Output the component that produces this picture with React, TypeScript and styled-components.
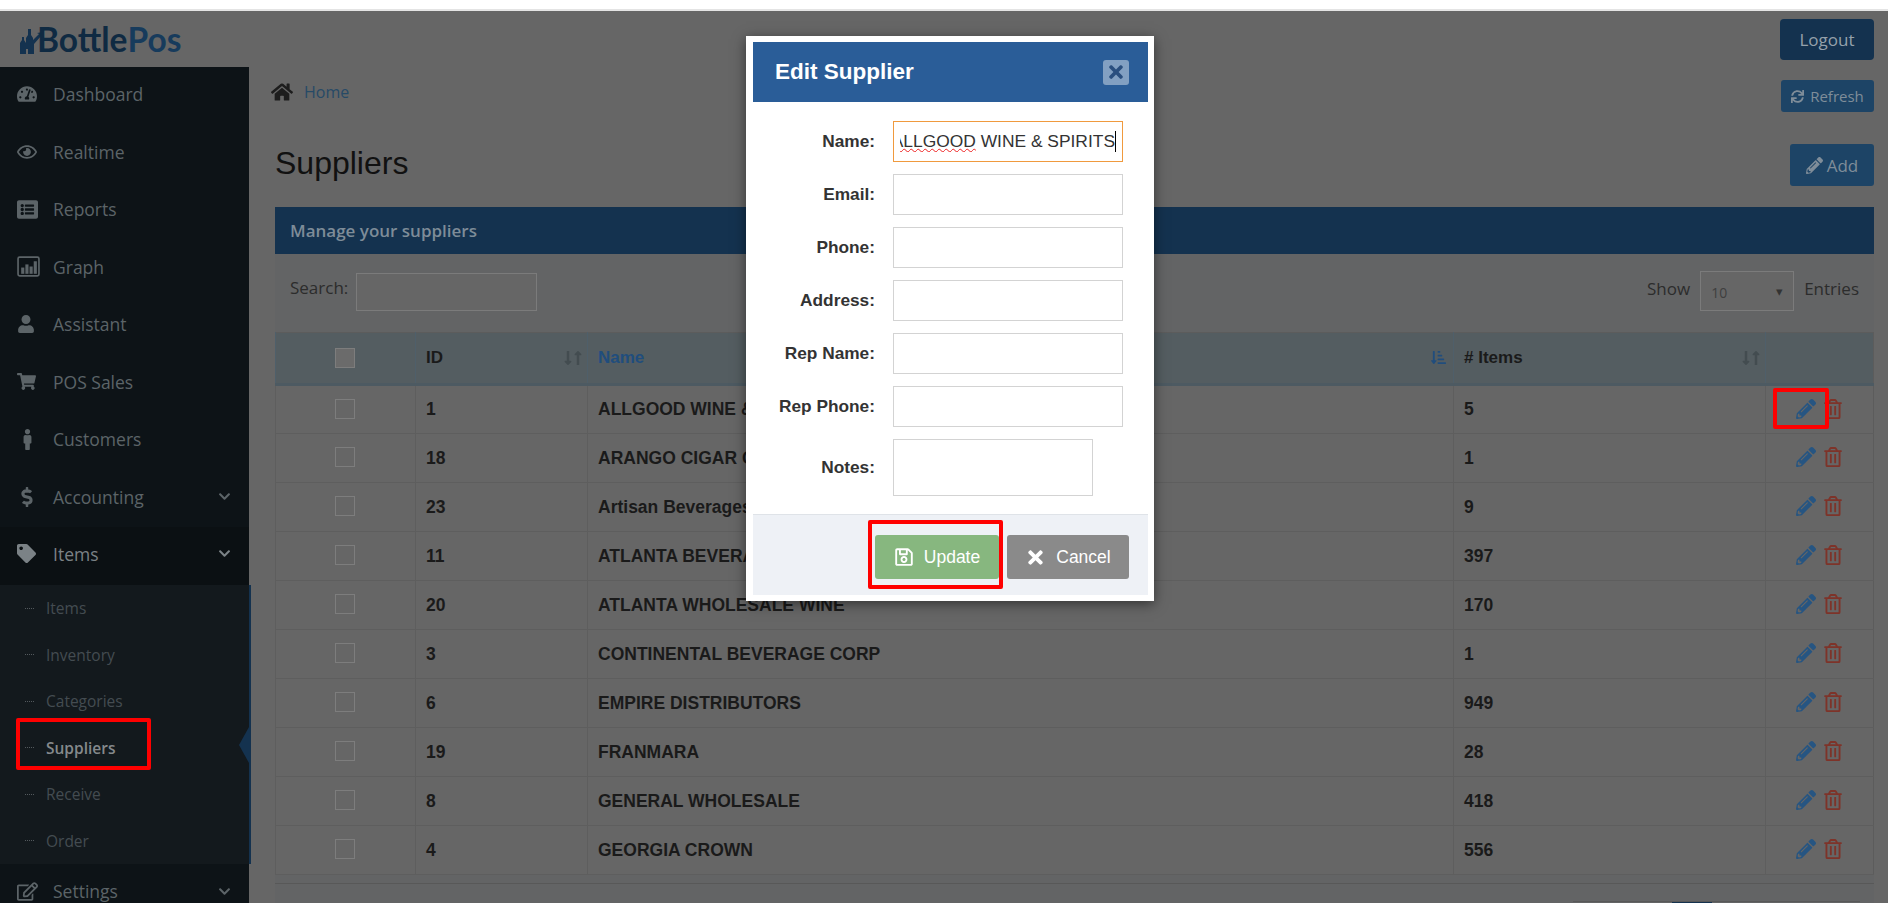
import { FC, ReactNode } from "react";
import styled, { createGlobalStyle } from "styled-components";
import {
  FaTachometerAlt,
  FaRegEye,
  FaListAlt,
  FaUser,
  FaShoppingCart,
  FaMale,
  FaDollarSign,
  FaTag,
  FaRegEdit,
  FaHome,
  FaSync,
  FaPencilAlt,
  FaRegTrashAlt,
  FaRegSave,
  FaTimes,
  FaLongArrowAltDown,
  FaLongArrowAltUp,
  FaSortAmountDownAlt,
  FaChevronDown,
} from "react-icons/fa";

const GlobalStyle = createGlobalStyle`
  html, body {
    margin: 0;
    padding: 0;
    background: #fff;
    overflow: hidden;
  }
  * {
    box-sizing: border-box;
  }
`;

const GraphIcon: FC = () => (
  <svg width="1em" height="1em" viewBox="0 0 22 22" fill="currentColor">
    <rect x="1" y="2" width="20" height="18" rx="1.5" fill="none" stroke="currentColor" strokeWidth="1.6" />
    <rect x="4" y="12" width="3" height="6" />
    <rect x="8" y="9" width="3" height="9" />
    <rect x="12" y="11" width="3" height="7" />
    <rect x="16" y="6" width="3" height="12" />
  </svg>
);

const navItems: Array<{ name: string; icon: ReactNode; size: number; arrow?: boolean; open?: boolean }> = [
  { name: "Dashboard", icon: <FaTachometerAlt />, size: 20 },
  { name: "Realtime", icon: <FaRegEye />, size: 20 },
  { name: "Reports", icon: <FaListAlt />, size: 21 },
  { name: "Graph", icon: <GraphIcon />, size: 23 },
  { name: "Assistant", icon: <FaUser />, size: 18 },
  { name: "POS Sales", icon: <FaShoppingCart />, size: 19 },
  { name: "Customers", icon: <FaMale />, size: 21 },
  { name: "Accounting", icon: <FaDollarSign />, size: 20, arrow: true },
  { name: "Items", icon: <FaTag />, size: 19, arrow: true, open: true },
];

const subItems = ["Items", "Inventory", "Categories", "Suppliers", "Receive", "Order"];

const suppliers = [
  { id: 1, name: "ALLGOOD WINE & SPIRITS", items: 5 },
  { id: 18, name: "ARANGO CIGAR CO", items: 1 },
  { id: 23, name: "Artisan Beverages", items: 9 },
  { id: 11, name: "ATLANTA BEVERAGE", items: 397 },
  { id: 20, name: "ATLANTA WHOLESALE WINE", items: 170 },
  { id: 3, name: "CONTINENTAL BEVERAGE CORP", items: 1 },
  { id: 6, name: "EMPIRE DISTRIBUTORS", items: 949 },
  { id: 19, name: "FRANMARA", items: 28 },
  { id: 8, name: "GENERAL WHOLESALE", items: 418 },
  { id: 4, name: "GEORGIA CROWN", items: 556 },
];

const formFields = ["Email", "Phone", "Address", "Rep Name", "Rep Phone"];

const SortArrows: FC = () => (
  <SortIcon>
    <FaLongArrowAltDown />
    <FaLongArrowAltUp />
  </SortIcon>
);

const Logo: FC = () => (
  <LogoWrap>
    <svg width="26" height="28" viewBox="0 0 26 28">
      <path
        d="M1 28V17l2-3v-3h2v3l2 3V12l2-3V3h3v6l2 3v2l6-6-2-1 6-1v6l-2-2-7 8v11H9v-6H7v6z"
        fill="#14324f"
      />
    </svg>
    <LogoDark>Bottle</LogoDark>
    <LogoLight>Pos</LogoLight>
  </LogoWrap>
);

export default function App() {
  return (
    <Page>
      <GlobalStyle />
      <TopStrip />
      <TopBar>
        <Logo />
        <LogoutButton>Logout</LogoutButton>
      </TopBar>
      <Body>
        <Sidebar>
          {navItems.map((item) => (
            <NavRow key={item.name} $open={item.open}>
              <NavIcon $size={item.size}>{item.icon}</NavIcon>
              <NavText>{item.name}</NavText>
              {item.arrow && <Chevron />}
            </NavRow>
          ))}
          <SubMenu>
            {subItems.map((name) => (
              <SubRow key={name} $active={name === "Suppliers"}>
                <SubDots />
                {name}
              </SubRow>
            ))}
            <ActiveArrow />
          </SubMenu>
          <NavRow>
            <NavIcon $size={21}>
              <FaRegEdit />
            </NavIcon>
            <NavText>Settings</NavText>
            <Chevron />
          </NavRow>
          <SuppliersMark />
        </Sidebar>

        <Main>
          <BreadcrumbRow>
            <Breadcrumb>
              <HomeIcon />
              <HomeLink>Home</HomeLink>
            </Breadcrumb>
            <RefreshButton>
              <FaSync />
              Refresh
            </RefreshButton>
          </BreadcrumbRow>

          <TitleRow>
            <Title>Suppliers</Title>
            <AddButton>
              <FaPencilAlt />
              Add
            </AddButton>
          </TitleRow>

          <Panel>
            <PanelHeader>Manage your suppliers</PanelHeader>
            <Toolbar>
              <SearchLabel>
                Search:
                <SearchBox />
              </SearchLabel>
              <ShowLabel>
                Show
                <SelectBox>
                  10
                  <SelectCaret>▾</SelectCaret>
                </SelectBox>
                Entries
              </ShowLabel>
            </Toolbar>

            <Table>
              <colgroup>
                <col style={{ width: 140 }} />
                <col style={{ width: 172 }} />
                <col style={{ width: 866 }} />
                <col style={{ width: 312 }} />
                <col />
              </colgroup>
              <thead>
                <tr>
                  <HeadCell $center>
                    <CheckBox $head />
                  </HeadCell>
                  <HeadCell>
                    ID
                    <SortArrows />
                  </HeadCell>
                  <HeadCell $sorted>
                    Name
                    <SortedIcon />
                  </HeadCell>
                  <HeadCell>
                    # Items
                    <SortArrows />
                  </HeadCell>
                  <HeadCell />
                </tr>
              </thead>
              <tbody>
                {suppliers.map((row) => (
                  <tr key={row.id}>
                    <Cell $center>
                      <CheckBox />
                    </Cell>
                    <Cell>{row.id}</Cell>
                    <Cell>{row.name}</Cell>
                    <Cell>{row.items}</Cell>
                    <Cell $center>
                      <Actions>
                        <EditIcon />
                        <TrashIcon />
                      </Actions>
                    </Cell>
                  </tr>
                ))}
              </tbody>
            </Table>

            <PagerBar>
              <Pager>
                <PagerCurrent />
              </Pager>
            </PagerBar>
          </Panel>
        </Main>
      </Body>

      <EditMark />
      <Modal>
        <ModalHeader>
          <ModalTitle>Edit Supplier</ModalTitle>
          <CloseButton>
            <FaTimes />
          </CloseButton>
        </ModalHeader>
        <ModalBody>
          <FormRow>
            <FieldLabel>Name:</FieldLabel>
            <NameField>
              <NameClip>
                <NameText>
                  <Misspelled>ALLGOOD</Misspelled> WINE &amp; SPIRITS
                </NameText>
              </NameClip>
            </NameField>
          </FormRow>
          {formFields.map((label) => (
            <FormRow key={label}>
              <FieldLabel>{label}:</FieldLabel>
              <FieldInput />
            </FormRow>
          ))}
          <FormRow>
            <FieldLabel>Notes:</FieldLabel>
            <NotesArea />
          </FormRow>
        </ModalBody>
        <ModalFooter>
          <UpdateButton>
            <SaveIcon />
            Update
            <UpdateMark />
          </UpdateButton>
          <CancelButton>
            <CancelIcon />
            Cancel
          </CancelButton>
        </ModalFooter>
      </Modal>
    </Page>
  );
}

const Page = styled.div`
  position: relative;
  width: 1888px;
  height: 903px;
  overflow: hidden;
  display: flex;
  flex-direction: column;
  background: #666;
  font-family: "Open Sans", sans-serif;
`;

const TopStrip = styled.div`
  height: 11px;
  background: #fff;
  border-bottom: 2px solid #e4e4e4;
`;

const TopBar = styled.header`
  height: 56px;
  display: flex;
  align-items: center;
  justify-content: space-between;
  padding: 0 14px 0 19px;
`;

const LogoWrap = styled.div`
  display: flex;
  align-items: flex-end;
  height: 30px;
  font: 700 33.5px "Lato", sans-serif;
  line-height: 30px;
`;

const LogoDark = styled.span`
  color: #0f2a42;
  margin-left: -8px;
`;

const LogoLight = styled.span`
  color: #173b5c;
`;

const LogoutButton = styled.button`
  width: 94px;
  height: 41px;
  border: 0;
  border-radius: 4px;
  background: #14324f;
  color: #95a1ab;
  font: 400 17px "Open Sans", sans-serif;
`;

const Body = styled.div`
  flex: 1;
  display: flex;
  min-height: 0;
`;

const Sidebar = styled.nav`
  position: relative;
  width: 249px;
  flex: none;
  background: #0d1317;
  color: #5c6468;
`;

const NavRow = styled.div<{ $open?: boolean }>`
  height: ${(p) => (p.$open ? "58px" : "57.5px")};
  display: flex;
  align-items: center;
  padding: 0 18px ${(p) => (p.$open ? "5px" : "3px")} 17px;
  background: ${(p) => (p.$open ? "#0b1013" : "transparent")};
  color: ${(p) => (p.$open ? "#7b8286" : "#5c6468")};
`;

const NavIcon = styled.span<{ $size: number }>`
  width: 36px;
  flex: none;
  display: flex;
  align-items: center;
  font-size: ${(p) => p.$size}px;
`;

const NavText = styled.span`
  flex: 1;
  font-size: 17.5px;
`;

const Chevron = styled(FaChevronDown)`
  font-size: 13px;
`;

const SubMenu = styled.div`
  position: relative;
  background: #13191d;
  margin-right: -2px;
  border-right: 2px solid #14324f;
`;

const SubRow = styled.div<{ $active?: boolean }>`
  height: 46.5px;
  display: flex;
  align-items: center;
  font-size: 15.5px;
  font-weight: ${(p) => (p.$active ? 600 : 400)};
  color: ${(p) => (p.$active ? "#85898c" : "#444c51")};
`;

const SubDots = styled.span`
  width: 9px;
  margin: 0 12px 0 25px;
  border-top: 1px dotted #53595d;
`;

const ActiveArrow = styled.span`
  position: absolute;
  right: 0;
  top: 142px;
  border-style: solid;
  border-width: 18px 10px 18px 0;
  border-color: transparent #14324f transparent transparent;
`;

const AnnotationBox = styled.span`
  position: absolute;
  border: 4px solid #f00;
  border-radius: 2px;
  pointer-events: none;
`;

const SuppliersMark = styled(AnnotationBox)`
  left: 16px;
  top: 651px;
  width: 135px;
  height: 52px;
`;

const EditMark = styled(AnnotationBox)`
  left: 1773px;
  top: 388px;
  width: 56px;
  height: 41px;
`;

const UpdateMark = styled(AnnotationBox)`
  left: -7px;
  top: -15px;
  width: 135px;
  height: 69px;
`;

const Main = styled.main`
  flex: 1;
  min-width: 0;
  padding: 13px 14px 0 26px;
`;

const BreadcrumbRow = styled.div`
  display: flex;
  justify-content: space-between;
  height: 32px;
`;

const Breadcrumb = styled.div`
  display: flex;
  align-items: center;
  gap: 11px;
  margin-left: -4px;
  padding-bottom: 8px;
`;

const HomeIcon = styled(FaHome)`
  font-size: 22px;
  color: #1d1d1d;
`;

const HomeLink = styled.span`
  font-size: 16px;
  color: #264a66;
`;

const BlueButton = styled.button`
  display: flex;
  align-items: center;
  justify-content: center;
  border: 0;
  border-radius: 3px;
  background: #1d4466;
  color: #7f8d99;
  font-family: "Open Sans", sans-serif;
`;

const RefreshButton = styled(BlueButton)`
  width: 93px;
  height: 32px;
  gap: 6px;
  font-size: 15px;

  svg {
    font-size: 13px;
  }
`;

const TitleRow = styled.div`
  display: flex;
  justify-content: space-between;
  align-items: center;
  height: 42px;
  margin: 32px 0 21px;
`;

const Title = styled.h1`
  margin: 0 0 3px;
  font: 400 32px "Liberation Sans", Arial, sans-serif;
  color: #111;
`;

const AddButton = styled(BlueButton)`
  width: 84px;
  height: 42px;
  gap: 4px;
  font-size: 17px;
`;

const Panel = styled.section`
  background: #636465;
`;

const PanelHeader = styled.div`
  height: 47px;
  padding: 0 15px;
  display: flex;
  align-items: center;
  background: #14324f;
  color: #7e8c98;
  font-size: 17px;
  font-weight: 600;
`;

const Toolbar = styled.div`
  height: 78px;
  padding: 19px 15px 0;
  display: flex;
  justify-content: space-between;
  align-items: flex-start;
  color: #2c2c2c;
  font-size: 17px;
`;

const SearchLabel = styled.label`
  display: flex;
  gap: 8px;
  line-height: 30px;
`;

const SearchBox = styled.div`
  width: 181px;
  height: 38px;
  border: 1px solid #7b7b7b;
  background: #666;
`;

const ShowLabel = styled.div`
  display: flex;
  gap: 10px;
  line-height: 31px;
`;

const SelectBox = styled.div`
  position: relative;
  width: 94px;
  height: 40px;
  margin-top: -2px;
  padding: 5px 10px;
  border: 1px solid #7b7b7b;
  background: #666;
  color: #3f3f3f;
  font-size: 14px;
`;

const SelectCaret = styled.span`
  position: absolute;
  right: 10px;
  top: 4px;
  font-size: 13px;
  color: #333;
`;

const Table = styled.table`
  width: 100%;
  table-layout: fixed;
  border-collapse: collapse;
  font: 700 17.5px "Liberation Sans", Arial, sans-serif;
  color: #1a1a1a;
  background: #666;
  border: 1px solid #5c5c5c;
`;

const HeadCell = styled.th<{ $center?: boolean; $sorted?: boolean }>`
  position: relative;
  height: 52px;
  padding: 0 10px;
  background: #545d61;
  border-left: 1px solid #4f5f6a;
  border-bottom: 3px solid #4d5a62;
  text-align: ${(p) => (p.$center ? "center" : "left")};
  color: ${(p) => (p.$sorted ? "#204d7d" : "#1a1a1a")};
  font-size: 17px;
  font-weight: 700;
`;

const Cell = styled.td<{ $center?: boolean }>`
  height: 49px;
  padding: 0 10px;
  border-left: 1px solid #5e5e5e;
  border-bottom: 1px solid #5e5e5e;
  text-align: ${(p) => (p.$center ? "center" : "left")};
`;

const CheckBox = styled.span<{ $head?: boolean }>`
  display: inline-block;
  width: 20px;
  height: 20px;
  margin: ${(p) => (p.$head ? "0 2px 0 0" : "-3px 2px 0 0")};
  vertical-align: middle;
  border: 1px solid #7d7d7d;
  background: ${(p) => (p.$head ? "#6b6b6b" : "#666")};
`;

const SortIcon = styled.span`
  position: absolute;
  right: 7px;
  top: 17px;
  display: flex;
  font-size: 16px;
  color: #434c50;

  svg {
    margin-right: -6px;
  }
`;

const SortedIcon = styled(FaSortAmountDownAlt)`
  position: absolute;
  right: 7px;
  top: 17px;
  font-size: 15px;
  color: #204d7d;
`;

const Actions = styled.span`
  display: inline-flex;
  align-items: center;
  gap: 7px;
  margin-top: -3px;
  vertical-align: middle;
`;

const EditIcon = styled(FaPencilAlt)`
  font-size: 20px;
  color: #265582;
`;

const TrashIcon = styled(FaRegTrashAlt)`
  font-size: 20px;
  color: #7e3329;
`;

const PagerBar = styled.div`
  margin-top: 8px;
  padding: 17px 14px 0 0;
  border-top: 1px solid #585858;
  display: flex;
  justify-content: flex-end;
`;

const Pager = styled.div`
  width: 287px;
  height: 40px;
  border-top: 1px solid #585858;
  padding-left: 99px;
`;

const PagerCurrent = styled.span`
  display: block;
  width: 40px;
  height: 40px;
  background: #14324f;
`;

const Modal = styled.div`
  position: absolute;
  left: 746px;
  top: 36px;
  width: 408px;
  height: 565px;
  padding: 6px 6px 6px 7px;
  display: flex;
  flex-direction: column;
  background: #fff;
  box-shadow: 0 3px 12px rgba(0, 0, 0, 0.5);
  font-family: "Liberation Sans", Arial, sans-serif;
`;

const ModalHeader = styled.div`
  height: 60px;
  flex: none;
  display: flex;
  align-items: center;
  justify-content: space-between;
  padding: 0 19px 0 22px;
  background: #2a5d98;
`;

const ModalTitle = styled.h2`
  margin: 0;
  color: #fff;
  font-size: 22.5px;
  font-weight: 700;
`;

const CloseButton = styled.span`
  width: 26px;
  height: 25px;
  border-radius: 3px;
  display: flex;
  align-items: center;
  justify-content: center;
  background: #82a0c2;
  color: #2a4f7f;
  font-size: 20px;
`;

const ModalBody = styled.div`
  flex: 1;
  padding-top: 19px;
  display: flex;
  flex-direction: column;
  gap: 12px;
`;

const FormRow = styled.div`
  display: flex;
  align-items: center;
  gap: 18px;
`;

const FieldLabel = styled.label`
  width: 122px;
  text-align: right;
  font-size: 17.3px;
  font-weight: 700;
  color: #333;
`;

const FieldInput = styled.div`
  width: 230px;
  height: 41px;
  border: 1px solid #d3d3d3;
  background: #fff;
`;

const NameField = styled(FieldInput)`
  display: flex;
  align-items: center;
  padding: 0 6px;
  border-color: #f09a3e;
`;

const NameClip = styled.div`
  flex: 1;
  min-width: 0;
  display: flex;
  justify-content: flex-end;
  overflow: hidden;
  white-space: nowrap;
`;

const NameText = styled.span`
  flex: none;
  font-size: 17.4px;
  color: #333;
  border-right: 1px solid #000;
`;

const Misspelled = styled.span`
  text-decoration: underline wavy #e22;
  text-decoration-thickness: 1px;
`;

const NotesArea = styled(FieldInput)`
  width: 200px;
  height: 57px;
`;

const ModalFooter = styled.div`
  height: 81px;
  flex: none;
  padding: 20px 19px 0 0;
  display: flex;
  justify-content: flex-end;
  gap: 8px;
  background: #eef1f6;
  border-top: 1px solid #dfe3e8;
`;

const FooterButton = styled.button`
  position: relative;
  height: 44px;
  display: flex;
  align-items: center;
  justify-content: center;
  gap: 10px;
  border: 0;
  border-radius: 3px;
  color: #fff;
  font: 400 17.5px "Liberation Sans", Arial, sans-serif;
`;

const SaveIcon = styled(FaRegSave)`
  font-size: 20px;
`;

const CancelIcon = styled(FaTimes)`
  font-size: 21px;
`;

const UpdateButton = styled(FooterButton)`
  width: 124px;
  background: #87b77f;
`;

const CancelButton = styled(FooterButton)`
  width: 122px;
  background: #8a8a8a;
`;
